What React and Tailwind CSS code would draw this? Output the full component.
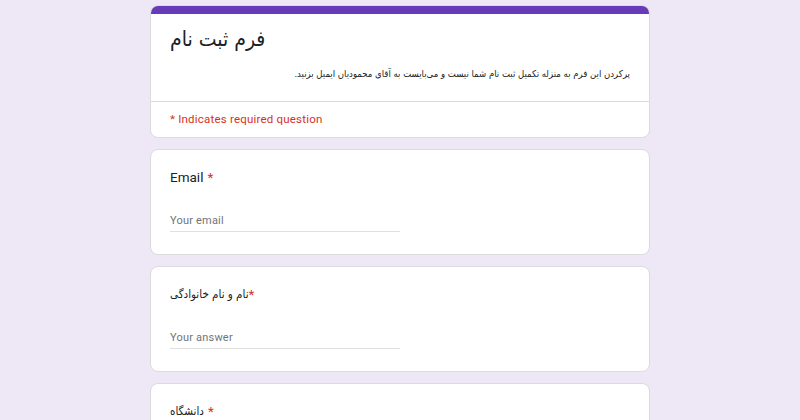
export default function App() {
  const fa = { fontFamily: "'DejaVu Sans Condensed', 'DejaVu Sans', sans-serif" };
  return (
    <div className="min-h-[420px] bg-[#ede7f6] pt-[5px] font-['Roboto',sans-serif] text-[#202124]">
      <div className="mx-auto flex w-[500px] flex-col gap-[11px]">
        {/* header card */}
        <div className="overflow-hidden rounded-lg border border-[#dadce0] bg-white">
          <div className="h-[8px] bg-[#673ab7]" />
          <div className="border-b border-[#dadce0] px-[19px] pb-[19px] pt-[8px]">
            <h1 className="text-[21px] leading-[34px]" style={fa}>
              فرم ثبت نام
            </h1>
            <p dir="rtl" className="mt-[10px] text-right text-[9.5px] leading-[16px]" style={fa}>
              پرکردن این فرم به منزله تکمیل ثبت نام شما نیست و می‌بایست به آقای محمودیان ایمیل بزنید.
            </p>
          </div>
          <div className="px-[19px] pb-[8px] pt-[7px] text-[11.5px] tracking-[0.2px] leading-[20px] text-[#d93025]">
            * Indicates required question
          </div>
        </div>

        <Question label="Email" placeholder="Your email" />
        <Question label="نام و نام خانوادگی" placeholder="Your answer" rtl tight />
        <Question label="دانشگاه" placeholder="Your answer" rtl />
      </div>
    </div>
  );
}

function Question({ label, placeholder, rtl, tight }) {
  const fa = rtl ? { fontFamily: "'DejaVu Sans Condensed', 'DejaVu Sans', sans-serif" } : undefined;
  return (
    <div className="rounded-lg border border-[#dadce0] bg-white px-[19px] pb-[22px] pt-[16px]">
      <div className="flex items-center text-[13.5px] leading-[22px]">
        <span className={rtl ? "text-[11.5px]" : ""} style={fa}>
          {label}
        </span>
        <span className={(tight ? "ml-0" : "ml-[4px]") + " text-[#d93025]"}>*</span>
      </div>
      <div className="mt-[22px] w-[230px] border-b border-[#e0e0e0] pt-[1px] text-[11px] tracking-[0.2px] leading-[20px] text-[#70757a]">
        {placeholder}
      </div>
    </div>
  );
}
